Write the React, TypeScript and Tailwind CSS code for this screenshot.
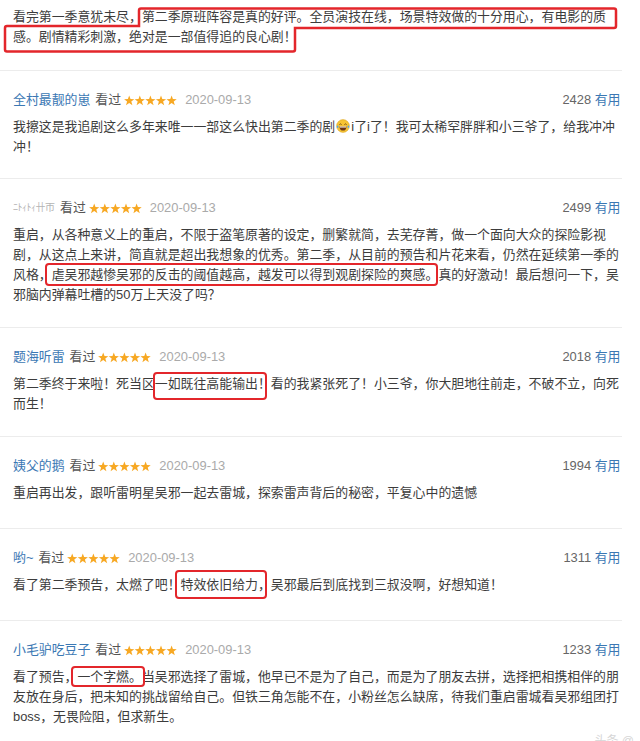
import React from 'react';

const Stars: React.FC = () => (
  <svg width="53" height="11" viewBox="0 0 53 11" className="ml-[3px] shrink-0">
    {[0, 1, 2, 3, 4].map(i => (
      <polygon
        key={i}
        transform={`translate(${i * 10.6} 0.5)`}
        points="5.2,0 6.5,3.6 10.3,3.7 7.3,6.1 8.4,9.8 5.2,7.6 2,9.8 3.1,6.1 0.1,3.7 3.9,3.6"
        fill="#f7a823"
      />
    ))}
  </svg>
);

const LaughCry: React.FC = () => (
  <svg width="14" height="14" viewBox="0 0 14 14" className="mx-[1px] inline-block align-[-2px]">
    <circle cx="7" cy="7" r="6.4" fill="#f6c433" stroke="#d99f1a" strokeWidth="0.5" />
    <path d="M3.4 5.6 Q4.5 4.2 5.6 5.6" stroke="#6b4412" strokeWidth="0.9" fill="none" />
    <path d="M8.4 5.6 Q9.5 4.2 10.6 5.6" stroke="#6b4412" strokeWidth="0.9" fill="none" />
    <path d="M3.4 7.4 H10.6 Q10.1 11.6 7 11.6 Q3.9 11.6 3.4 7.4Z" fill="#6b3512" />
    <path d="M3.7 7.4 H10.3 L10.1 8.5 H3.9 Z" fill="#fff" />
    <path d="M1.2 6.4 Q0 8.6 1.6 9.1 Q2.9 8.4 2.3 6.8Z" fill="#4fa2e6" />
    <path d="M12.8 6.4 Q14 8.6 12.4 9.1 Q11.1 8.4 11.7 6.8Z" fill="#4fa2e6" />
  </svg>
);

const Mark: React.FC<{ children: React.ReactNode; pos: string }> = ({ children, pos }) => (
  <span className="relative inline-block">
    {children}
    <span className={`pointer-events-none absolute rounded-[4px] border-[2.5px] border-[#e3262b] ${pos}`} />
  </span>
);

const Header: React.FC<{ name: React.ReactNode; votes: number }> = ({ name, votes }) => (
  <div className="flex h-[20px] items-center justify-between leading-[20px]">
    <div className="flex items-center">
      {name}
      <span className="ml-[5px] text-[#555]">看过</span>
      <Stars />
      <span className="ml-[8px] text-[#aaa]">2020-09-13</span>
    </div>
    <div>
      <span className="text-[#666]">{votes}</span> <span className="text-[#3b78b4]">有用</span>
    </div>
  </div>
);

const Name: React.FC<{ children: React.ReactNode }> = ({ children }) => (
  <span className="text-[#3b78b4]">{children}</span>
);

export default function App() {
  return (
    <div className="relative h-[741px] w-[640px] overflow-hidden bg-white font-['Liberation_Sans','Noto_Sans_CJK_SC',sans-serif] text-[12.9px] text-[#3c3c3c]">
      <div className="mr-[18px] border-b border-[#ececec] pb-[23px] pl-[13px] pr-[1.5px] pt-[7px] leading-[20px]">
        看完第一季意犹未尽，第二季原班阵容是真的好评。全员演技在线，场景特效做的十分用心，有电影的质感。剧情精彩刺激，绝对是一部值得追的良心剧！
      </div>

      <div className="mr-[18px] border-b border-[#ececec] pb-[21px] pl-[13px] pr-[1.5px] pt-[19px]">
        <Header name={<Name>全村最靓的崽</Name>} votes={2428} />
        <p className="mt-[7px] leading-[20px]">
          我擦这是我追剧这么多年来唯一一部这么快出第二季的剧<LaughCry />i了i了！我可太稀罕胖胖和小三爷了，给我冲冲冲！
        </p>
      </div>

      <div className="mr-[18px] border-b border-[#ececec] pb-[22px] pl-[13px] pr-[1.5px] pt-[19px]">
        <Header
          name={<span className="w-[42px] text-[10px] tracking-[-0.5px] text-[#b4b4b4]">ﾆﾄｨﾄｨ卄帀</span>}
          votes={2499}
        />
        <p className="mt-[7px] leading-[20px]">
          重启，从各种意义上的重启，不限于盗笔原著的设定，删繁就简，去芜存菁，做一个面向大众的探险影视剧，从这点上来讲，简直就是超出我想象的优秀。第二季，从目前的预告和片花来看，仍然在延续第一季的风格，
          <Mark pos="left-[-7px] right-0 top-[-2px] bottom-[-1px]">虐吴邪越惨吴邪的反击的阈值越高，越发可以得到观剧探险的爽感。</Mark>
          真的好激动！最后想问一下，吴邪脑内弹幕吐槽的50万上天没了吗？
        </p>
      </div>

      <div className="mr-[18px] border-b border-[#ececec] pb-[22px] pl-[13px] pr-[1.5px] pt-[19px]">
        <Header name={<Name>题海听雷</Name>} votes={2018} />
        <p className="mt-[7px] leading-[20px]">
          第二季终于来啦！死当区
          <Mark pos="left-[-2px] right-[4px] top-[-2px] bottom-[-6px]">一如既往高能输出！</Mark>
          看的我紧张死了！小三爷，你大胆地往前走，不破不立，向死而生！
        </p>
      </div>

      <div className="mr-[18px] border-b border-[#ececec] pb-[25px] pl-[13px] pr-[1.5px] pt-[19px]">
        <Header name={<Name>姨父的鹅</Name>} votes={1994} />
        <p className="mt-[7px] leading-[20px]">
          重启再出发，跟听雷明星吴邪一起去雷城，探索雷声背后的秘密，平复心中的遗憾
        </p>
      </div>

      <div className="mr-[18px] border-b border-[#ececec] pb-[25px] pl-[13px] pr-[1.5px] pt-[19px]">
        <Header name={<Name>哟~</Name>} votes={1311} />
        <p className="mt-[7px] leading-[20px]">
          看了第二季预告，太燃了吧！
          <Mark pos="left-[-6px] right-[4px] top-[-5px] bottom-[-4px]">特效依旧给力，</Mark>
          吴邪最后到底找到三叔没啊，好想知道！
        </p>
      </div>

      <div className="mr-[18px] pb-[22px] pl-[13px] pr-[1.5px] pt-[19px]">
        <Header name={<Name>小毛驴吃豆子</Name>} votes={1233} />
        <p className="mt-[7px] leading-[20px]">
          看了预告，
          <Mark pos="left-[-6px] right-[-3px] top-[-1px] bottom-0">一个字燃。</Mark>
          当吴邪选择了雷城，他早已不是为了自己，而是为了朋友去拼，选择把相携相伴的朋友放在身后，把未知的挑战留给自己。但铁三角怎能不在，小粉丝怎么缺席，待我们重启雷城看吴邪组团打boss，无畏险阻，但求新生。
        </p>
      </div>

      <svg className="pointer-events-none absolute left-0 top-0" width="640" height="60">
        <path
          d="M141,8.5 H614 Q616,8.5 616,10.5 V26 Q616,28 614,28 H295 V49.5 Q295,51.5 293,51.5 H7 Q5,51.5 5,49.5 V28 Q5,26 7,26 H139 V10.5 Q139,8.5 141,8.5 Z"
          stroke="#e3262b"
          strokeWidth="2.5"
          fill="none"
        />
      </svg>

      <div className="absolute right-[6px] top-[734px] text-[12px] leading-[14px] text-[#d6d6d6]">头条 @</div>
    </div>
  );
}
